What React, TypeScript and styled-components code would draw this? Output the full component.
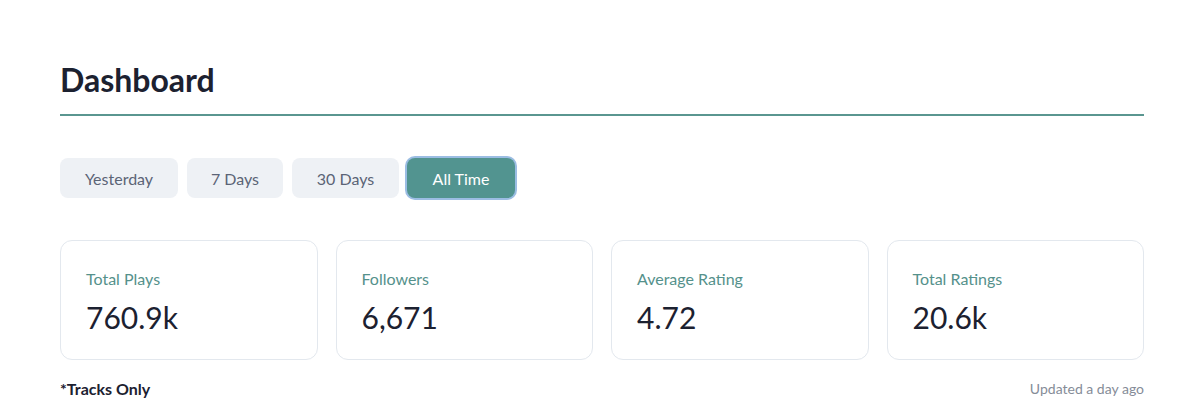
import React, { useState } from "react";
import styled, { createGlobalStyle } from "styled-components";

const Global = createGlobalStyle`
  html, body { margin: 0; padding: 0; background: #ffffff; }
  body { font-family: Lato, "Noto Sans", sans-serif; color: #1c2130; }
`;

const Page = styled.div`
  width: 1084px;
  margin-left: 60px;
  padding-top: 60px;
`;

const Title = styled.h1`
  margin: 0;
  font-size: 32px;
  font-weight: 700;
  line-height: 40px;
  color: #1c2130;
  padding-bottom: 14px;
  border-bottom: 2px solid #5a9690;
`;

const Tabs = styled.div`
  display: flex;
  gap: 9px;
  margin-top: 42px;
`;

const Tab = styled.button<{ $active?: boolean; $w: number }>`
  width: ${(p) => p.$w}px;
  height: 40px;
  border-radius: 8px;
  font-family: inherit;
  font-size: 16px;
  cursor: pointer;
  border: none;
  background: ${(p) => (p.$active ? "#529490" : "#eef1f5")};
  color: ${(p) => (p.$active ? "#ffffff" : "#5b6476")};
  box-shadow: ${(p) => (p.$active ? "0 0 0 2px #9bbde3" : "none")};
  margin-left: ${(p) => (p.$active ? "-1px" : "0")};
`;

const Cards = styled.div`
  display: grid;
  grid-template-columns: repeat(4, 1fr);
  gap: 18px;
  margin-top: 42px;
`;

const Card = styled.div`
  height: 120px;
  box-sizing: border-box;
  border: 1px solid #e3e8ee;
  border-radius: 12px;
  padding: 28px 25px 0;
`;

const Label = styled.div`
  font-size: 16px;
  line-height: 20px;
  color: #55918b;
`;

const Value = styled.div`
  margin-top: 10px;
  font-size: 30px;
  line-height: 36px;
  color: #1c2130;
`;

const Footer = styled.div`
  display: flex;
  justify-content: space-between;
  align-items: center;
  margin-top: 19px;
`;

const Note = styled.div`
  font-size: 16px;
  font-weight: 700;
  color: #1c2130;
`;

const Updated = styled.div`
  font-size: 14px;
  color: #858c98;
`;

const tabs = [
  { label: "Yesterday", w: 118 },
  { label: "7 Days", w: 96 },
  { label: "30 Days", w: 107 },
  { label: "All Time", w: 108 },
];

const stats = [
  { label: "Total Plays", value: "760.9k" },
  { label: "Followers", value: "6,671" },
  { label: "Average Rating", value: "4.72" },
  { label: "Total Ratings", value: "20.6k" },
];

export default function App() {
  const [active, setActive] = useState("All Time");
  return (
    <>
      <Global />
      <Page>
        <Title>Dashboard</Title>
        <Tabs>
          {tabs.map((t) => (
            <Tab key={t.label} $w={t.w} $active={active === t.label} onClick={() => setActive(t.label)}>
              {t.label}
            </Tab>
          ))}
        </Tabs>
        <Cards>
          {stats.map((s) => (
            <Card key={s.label}>
              <Label>{s.label}</Label>
              <Value>{s.value}</Value>
            </Card>
          ))}
        </Cards>
        <Footer>
          <Note>*Tracks Only</Note>
          <Updated>Updated a day ago</Updated>
        </Footer>
      </Page>
    </>
  );
}
